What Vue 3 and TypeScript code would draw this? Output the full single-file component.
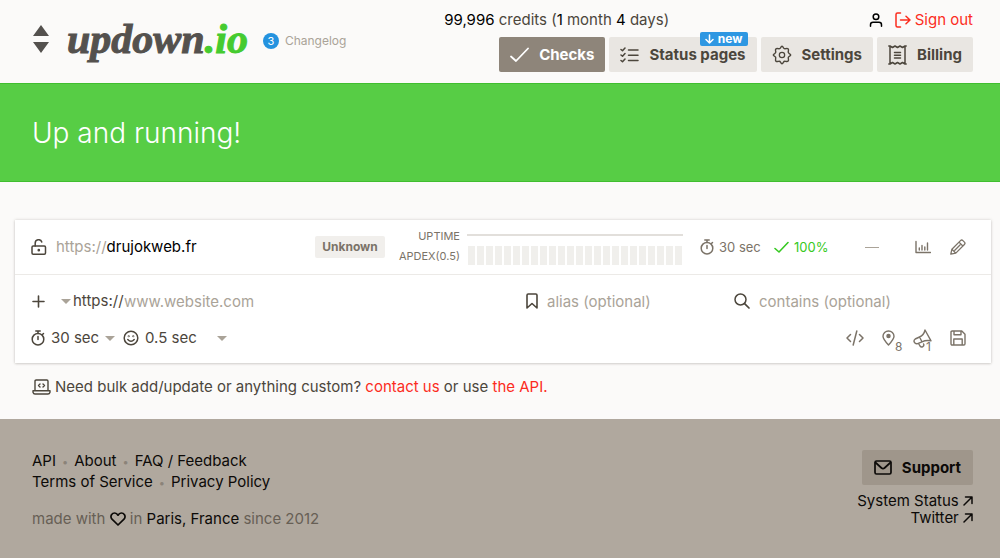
<script setup lang="ts">
import { ref } from 'vue'

interface FooterLink {
  label: string
  href: string
}

const scheme = ref('https://')
const period = ref('30 sec')
const apdex = ref('0.5 sec')
const url = ref('')
const alias = ref('')
const contains = ref('')

const apdexBars = 24

const footerLines: FooterLink[][] = [
  [
    { label: 'API', href: '#api' },
    { label: 'About', href: '#about' },
    { label: 'FAQ / Feedback', href: '#faq' },
  ],
  [
    { label: 'Terms of Service', href: '#terms' },
    { label: 'Privacy Policy', href: '#privacy' },
  ],
]
</script>

<template>
  <div class="page">
    <header class="header">
      <div class="brand">
        <svg class="updown" width="16" height="28" viewBox="0 0 16 28" aria-hidden="true">
          <path d="M8 0l8 11H0zM8 28l8-11H0z" fill="#54514e" />
        </svg>
        <a class="logo" href="#home">updown<span class="logo-tld">.io</span></a>
        <a class="changelog" href="#changelog"><span class="count">3</span>Changelog</a>
      </div>
      <div class="menu">
        <div class="account">
          <a class="credits" href="#credits"><b>99,996</b> credits (<b>1</b> month <b>4</b> days)</a>
          <div class="session">
            <a class="user" href="#account" aria-label="Account">
              <svg width="14" height="14" viewBox="0 0 14 14" class="line">
                <circle cx="7" cy="3.8" r="2.8" />
                <path d="M1.5 13.2v-1.4c0-1.500 1-2.500 2.500-2.500h6c1.500 0 2.500 1 2.500 2.500v1.400" />
              </svg>
            </a>
            <a class="signout" href="#signout">
              <svg width="16" height="16" viewBox="0 0 16 16" class="line">
                <path d="M5.500 1H2.500Q1 1 1 2.500v11Q1 15 2.500 15h3M5.500 8h9.500M11 4.200L15 8l-4 3.800" />
              </svg>
              Sign out
            </a>
          </div>
        </div>
        <nav class="tabs">
          <a class="tab active" href="#checks">
            <svg width="19" height="18" viewBox="0 0 19 18" class="line">
              <path d="M1 10.500l5 4.500L18 2.500" stroke-width="1.800" />
            </svg>
            Checks
          </a>
          <a class="tab" href="#status">
            <svg width="19" height="18" viewBox="0 0 19 18" class="line">
              <path d="M1 3.500l1.500 1.300L5 2M1 9l1.500 1.300L5 7.500M1 14.500l1.500 1.300L5 13M8.500 4H18M8.500 9.200H18M8.500 14.500H18" />
            </svg>
            Status pages
            <span class="new">
              <svg width="9" height="10" viewBox="0 0 9 10" class="line"><path d="M4.500 1v8M1 5.500L4.500 9 8 5.500" /></svg>
              new
            </span>
          </a>
          <a class="tab" href="#settings">
            <svg width="20" height="20" viewBox="0 0 24 24" class="line">
              <circle cx="12" cy="12" r="3.200" />
              <path stroke-width="1.700" d="M10.300 3.300Q12-.2 13.700 3.300Q14.500 5 16.400 4.400Q20.600 3.200 19.600 7.600Q19 9.500 20.700 10.300Q24.200 12 20.700 13.700Q19 14.500 19.600 16.400Q20.800 20.600 16.400 19.600Q14.500 19 13.700 20.700Q12 24.200 10.300 20.700Q9.500 19 7.600 19.600Q3.400 20.800 4.400 16.400Q5 14.500 3.300 13.700Q-.2 12 3.300 10.300Q5 9.500 4.400 7.600Q3.200 3.400 7.600 4.400Q9.500 5 10.300 3.300z" />
            </svg>
            Settings
          </a>
          <a class="tab" href="#billing">
            <svg width="19" height="20" viewBox="0 0 19 20" class="line">
              <path d="M2 1l2.500 1.500L7 1l2.500 1.500L12 1l2.500 1.500L17 1v18l-2.500-1.500-2.500 1.500-2.500-1.500L7 19l-2.500-1.500L2 19zM6.500 7.500h6M6.500 10.200h6M6.500 13h6M.8 1h1.200M17 1h1.200M.8 19h1.200M17 19h1.200" />
            </svg>
            Billing
          </a>
        </nav>
      </div>
    </header>

    <section class="hero">
      <h1>Up and running!</h1>
    </section>

    <main>
      <section class="card">
        <div class="check">
          <svg width="16" height="16" viewBox="0 0 16 16" class="line lock">
            <rect x="1" y="7" width="13.500" height="8.200" rx="1.200" />
            <path d="M4.200 7V4.200a3.400 3.400 0 0 1 6.600-1.200" />
            <circle cx="7.800" cy="11.200" r=".6" fill="currentColor" />
          </svg>
          <a class="site" href="#check"><span>https://</span>drujokweb.fr</a>
          <span class="badge">Unknown</span>
          <div class="metrics">
            <span class="metric">UPTIME</span>
            <div class="uptime"></div>
            <span class="metric">APDEX(0.5)</span>
            <div class="bars"><i v-for="n in apdexBars" :key="n"></i></div>
          </div>
          <span class="interval">
            <svg width="14" height="16" viewBox="0 0 14 16" class="line">
              <circle cx="7" cy="9.200" r="5.800" /><path d="M7 3.200V1M4.800 1h4.400M7 6.500v3M11.500 4.500l1-1" />
            </svg>
            30 sec
          </span>
          <span class="rate">
            <svg width="15" height="13" viewBox="0 0 15 13" class="line"><path d="M1 7.500L5 11 14 1.500" stroke-width="1.600" /></svg>
            100%
          </span>
          <span class="dash"></span>
          <a class="tool" href="#stats" aria-label="Statistics">
            <svg width="16" height="16" viewBox="0 0 16 16" class="line">
              <path d="M1 2.500v11h14.500M4.300 9v2M7 6.500V11M9.800 8v3M12.500 4v7" stroke-width="1.400" />
            </svg>
          </a>
          <a class="tool" href="#edit" aria-label="Edit">
            <svg width="16" height="16" viewBox="0 0 16 16" class="line">
              <path d="M.8 15.200l1.100-5L10.500 1.600q1.200-1.200 2.400 0l1.500 1.500q1.200 1.200 0 2.400L5.800 14.100zM9 3.100L12.900 7M1.900 10.200l3.900 3.900M4.800 11.200l5.200-5.200" stroke-width="1.300" />
            </svg>
          </a>
        </div>

        <form class="new-check" @submit.prevent>
          <div class="fields">
            <svg width="15" height="15" viewBox="0 0 15 15" class="line"><path d="M7.500 2v11M2 7.500h11" stroke-width="1.600" /></svg>
            <div class="picker scheme">
              <select v-model="scheme" aria-label="Scheme">
                <option>https://</option>
                <option>http://</option>
              </select>
            </div>
            <input v-model="url" class="url" type="text" placeholder="www.website.com" aria-label="URL" />
            <label class="field alias">
              <svg width="12" height="16" viewBox="0 0 12 16" class="line"><path d="M1 15V2.200Q1 1 2.200 1h7.600Q11 1 11 2.200V15l-5-4.500z" stroke-width="1.600" /></svg>
              <input v-model="alias" type="text" placeholder="alias (optional)" aria-label="Alias" />
            </label>
            <label class="field contains">
              <svg width="16" height="16" viewBox="0 0 16 16" class="line"><circle cx="6.500" cy="6.500" r="5.500" /><path d="M10.600 10.600L15 15" stroke-width="1.700" /></svg>
              <input v-model="contains" type="text" placeholder="contains (optional)" aria-label="Contains" />
            </label>
          </div>
          <div class="options">
            <svg width="14" height="16" viewBox="0 0 14 16" class="line">
              <circle cx="7" cy="9.200" r="5.800" /><path d="M7 3.200V1M4.800 1h4.400M7 6.500v3M11.500 4.500l1-1" />
            </svg>
            <div class="picker period">
              <select v-model="period" aria-label="Period">
                <option>30 sec</option>
                <option>1 min</option>
              </select>
            </div>
            <svg width="16" height="16" viewBox="0 0 16 16" class="line">
              <circle cx="8" cy="8" r="6.800" /><path d="M4.800 9.500q3.200 3.500 6.400 0" />
              <circle cx="5.700" cy="6.200" r=".3" /><circle cx="10.300" cy="6.200" r=".3" />
            </svg>
            <div class="picker apdex">
              <select v-model="apdex" aria-label="Apdex threshold">
                <option>0.5 sec</option>
                <option>1 sec</option>
              </select>
            </div>
            <div class="actions">
              <button type="button" aria-label="HTTP request">
                <svg width="18" height="16" viewBox="0 0 18 16" class="line"><path d="M4.500 4.500L1 8l3.500 3.500M13.500 4.500L17 8l-3.500 3.500M10.800 1L7.200 15" /></svg>
              </button>
              <button type="button" aria-label="Locations">
                <svg width="13" height="16" viewBox="0 0 13 16" class="line"><path d="M6.500 15Q1 9 1 6.200a5.500 5.200 0 0 1 11 0Q12 9 6.500 15z" stroke-width="1.400" /><circle cx="6.500" cy="6" r="1.500" fill="currentColor" /></svg>
                <span class="sub">8</span>
              </button>
              <button type="button" aria-label="Recipients">
                <svg width="19" height="19" viewBox="0 0 19 19" class="line"><path d="M12 1L18 11.800Q13 10.800 9 12.800L6.500 8Q11 6 12 1zM6.500 8L2.200 10Q.4 11.200 1.300 13.200Q2.400 15.200 4.600 14.600L9 12.800M5.500 14.500L7 17q1.200 1.600 2.800.6t.8-2.600" stroke-width="1.400" /></svg>
                <span class="sub">1</span>
              </button>
              <button type="submit" aria-label="Save">
                <svg width="16" height="16" viewBox="0 0 16 16" class="line"><path d="M2.200 1h9.600L15 4.200v9.600q0 1.200-1.200 1.200H2.200Q1 15 1 13.800V2.200Q1 1 2.200 1zM4 1v3.800h7V1M3.800 15V9h8.400v6" stroke-width="1.400" /></svg>
              </button>
            </div>
          </div>
        </form>
      </section>

      <p class="help">
        <svg width="19" height="16" viewBox="0 0 19 16" class="line">
          <path d="M3 11.500V2.200Q3 1 4.200 1h10.600Q16 1 16 2.200v9.300M1 11.800h17v1.400Q17.500 15 16 15H3Q1.500 15 1 13.200zM8 5L6.500 6.500 8 8M11 5l1.500 1.500L11 8" stroke-width="1.400" />
        </svg>
        <span>Need bulk add/update or anything custom? <a href="#contact">contact us</a> or use <a href="#api">the API.</a></span>
      </p>
    </main>

    <footer class="footer">
      <div class="about">
        <div v-for="(line, i) in footerLines" :key="i" class="links">
          <a v-for="link in line" :key="link.label" :href="link.href">{{ link.label }}</a>
        </div>
        <p class="made">
          made with
          <svg width="16" height="14" viewBox="0 0 16 14" class="line"><path d="M8 13L2 7.200Q.2 5 1.500 2.800Q2.700 1 4.700 1Q6.700 1 8 3.200Q9.300 1 11.300 1Q13.300 1 14.500 2.800Q15.800 5 14 7.200z" stroke-width="1.700" /></svg>
          in <a href="#paris">Paris, France</a> since 2012
        </p>
      </div>
      <div class="contact">
        <a class="support" href="#support">
          <svg width="18" height="15" viewBox="0 0 18 15" class="line"><rect x="1" y="1" width="16" height="13" rx="1.500" stroke-width="1.700" /><path d="M1.500 2.500L7.500 8q1.500 1.200 3 0l6-5.500" stroke-width="1.700" /></svg>
          Support
        </a>
        <a v-for="name in ['System Status', 'Twitter']" :key="name" class="external" href="#external">
          {{ name }}
          <svg width="10" height="10" viewBox="0 0 10 10" class="line"><path d="M1 9l8-8M2.500 1H9v6.500" /></svg>
        </a>
      </div>
    </footer>
  </div>
</template>

<style>
body {
  background: #fbfaf9;
}
</style>

<style scoped>
.page {
  min-height: 100vh;
  display: flex;
  flex-direction: column;
  font: 15px/20px Inter, "Liberation Sans", sans-serif;
  color: #4c463c;
}

a {
  color: inherit;
  text-decoration: none;
}

.line {
  flex: none;
  fill: none;
  stroke: currentColor;
  stroke-width: 1.5;
  stroke-linecap: round;
  stroke-linejoin: round;
}

.header {
  display: flex;
  justify-content: space-between;
  height: 83px;
  padding: 0 27px 0 33px;
}

.brand {
  display: flex;
  align-items: center;
  padding-bottom: 6px;
}

.updown {
  margin-right: 18px;
}

.logo {
  font: italic bold 42px/50px "Liberation Serif", serif;
  -webkit-text-stroke: 1px currentColor;
  color: #54514e;
}

.logo-tld {
  color: #45cb30;
}

.changelog {
  display: flex;
  align-items: center;
  gap: 6px;
  margin: 4px 0 0 15px;
  font-size: 12px;
  color: #aaa398;
}

.count {
  width: 16px;
  border-radius: 8px;
  background: #2492df;
  color: #fff;
  font-size: 11px;
  line-height: 16px;
  text-align: center;
}

.menu {
  display: flex;
  flex-direction: column;
  gap: 7px;
  padding-top: 10px;
}

.account {
  display: flex;
  justify-content: space-between;
  margin-left: -55px;
}

.credits b {
  font-weight: 400;
  color: #000;
}

.session,
.signout {
  display: flex;
  align-items: center;
}

.session {
  gap: 12px;
}

.user {
  height: 14px;
  line-height: 14px;
  color: #000;
}

.user svg {
  display: block;
}

.signout {
  gap: 4px;
  color: #fb2c1e;
}

.tabs {
  display: flex;
  gap: 4px;
}

.tab {
  position: relative;
  display: flex;
  align-items: center;
  gap: 10px;
  height: 35px;
  padding: 0 11px;
  border-radius: 2px;
  background: #e9e6e2;
  font-weight: 700;
}

.tab.active {
  background: #8e857a;
  color: #fff;
}

.new {
  position: absolute;
  top: -5px;
  right: 9px;
  display: flex;
  align-items: center;
  gap: 4px;
  padding: 0 5px;
  border-radius: 2px;
  background: #2e97e2;
  color: #fff;
  font-size: 12px;
  line-height: 14px;
}

.hero {
  padding: 30px 32px 29px;
  border: solid #40be2f;
  border-width: 1px 0;
  background: #57cd45;
  color: #fff;
}

.hero h1 {
  margin: 0;
  font-size: 28px;
  font-weight: 300;
  line-height: 38px;
}

.card {
  margin: 38px 9px 0 15px;
  background: #fff;
  box-shadow: 0 0 3px rgba(60, 50, 40, 0.2), 0 1px 2px rgba(60, 50, 40, 0.12);
}

.check {
  display: flex;
  align-items: center;
  height: 54px;
  padding: 0 25px 0 16px;
  border-bottom: 1px solid #eceae7;
  color: #7b7368;
}

.lock {
  color: #4c463c;
}

.site {
  flex: 1;
  margin-left: 9px;
  color: #000;
}

.site span {
  color: #aaa398;
}

.badge {
  width: 70px;
  border-radius: 2px;
  background: #f1efec;
  font-size: 12px;
  font-weight: 700;
  line-height: 22px;
  text-align: center;
}

.metrics {
  display: grid;
  grid-template-columns: 75px 216px;
  column-gap: 7px;
  align-items: center;
  margin-bottom: 2px;
}

.metric {
  font-size: 11px;
  text-align: right;
}

.uptime {
  height: 2px;
  margin-bottom: 3px;
  background: #e2dfdb;
}

.bars {
  display: flex;
  gap: 2px;
  margin-bottom: 1px;
  padding: 0 1px;
}

.bars i {
  flex: 1;
  height: 19px;
  background: #f0efec;
}

.interval,
.rate {
  display: flex;
  align-items: center;
  gap: 5px;
  font-size: 13px;
}

.interval {
  width: 74px;
  margin-left: 17px;
}

.rate {
  width: 91px;
  color: #37c922;
}

.dash {
  width: 14px;
  height: 1px;
  margin-right: 36px;
  background: #aaa398;
}

.tool {
  height: 16px;
}

.tool + .tool {
  margin-left: 19px;
}

.tool svg {
  display: block;
}

.new-check {
  padding: 14px 25px 13px 16px;
}

.fields,
.options {
  display: flex;
  align-items: center;
  height: 24px;
}

.options {
  margin-top: 13px;
}

input,
select {
  min-width: 0;
  height: 24px;
  padding: 0;
  border: 0;
  background: transparent;
  font: inherit;
  color: inherit;
}

input::placeholder {
  color: #aaa398;
  opacity: 1;
}

select {
  width: 100%;
  appearance: none;
}

.picker {
  position: relative;
}

.picker::after {
  content: "";
  position: absolute;
  top: 10px;
  right: 0;
  border: solid transparent;
  border-width: 5px 5px 0;
  border-top-color: #aaa398;
  pointer-events: none;
}

.scheme {
  width: 63px;
  margin-left: 15px;
}

.scheme select {
  padding-left: 12px;
}

.scheme::after {
  right: auto;
  left: 0;
}

.url {
  flex: 1;
}

.field {
  display: flex;
  align-items: center;
  gap: 9px;
}

.field input {
  flex: 1;
}

.alias {
  width: 208px;
}

.contains {
  width: 232px;
}

.period {
  width: 64px;
  margin: 0 8px 0 6px;
}

.apdex {
  width: 82px;
  margin-left: 6px;
}

.actions {
  display: flex;
  align-items: center;
  gap: 18px;
  margin-left: auto;
  color: #7b7368;
}

button {
  position: relative;
  display: flex;
  align-items: center;
  height: 19px;
  padding: 0;
  border: 0;
  background: none;
  color: inherit;
  font: inherit;
}

.sub {
  position: absolute;
  left: 13px;
  bottom: -6px;
  font-size: 12px;
  line-height: 14px;
}

.help {
  display: flex;
  align-items: center;
  gap: 4px;
  margin: 14px 32px 22px;
}

.help a {
  color: #fb2c1e;
}

.footer {
  flex: 1;
  display: flex;
  justify-content: space-between;
  padding: 31px 27px 28px 32px;
  background: #b0a89e;
  color: #0c0a08;
}

.links {
  display: flex;
  height: 21px;
  line-height: 21px;
}

.links a + a::before {
  content: "•";
  margin: 0 6px;
  color: #8b8379;
  font-size: 11px;
  line-height: 1;
}

.made {
  margin: 17px 0 0;
  color: #675f55;
}

.made svg,
.made a {
  color: #0c0a08;
}

.made svg {
  vertical-align: -2px;
}

.contact {
  display: flex;
  flex-direction: column;
  align-items: flex-end;
}

.support {
  display: flex;
  align-items: center;
  gap: 10px;
  height: 35px;
  margin-bottom: 7px;
  padding: 0 12px;
  border-radius: 2px;
  background: #9f968b;
  font-weight: 700;
}

.external {
  line-height: 17px;
}
</style>
